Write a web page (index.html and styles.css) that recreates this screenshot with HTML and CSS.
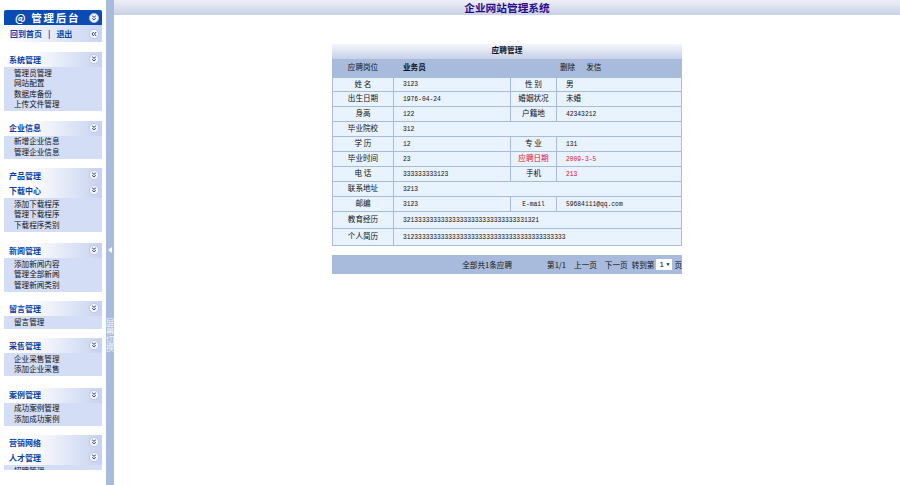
FILE: index.html
```html
<!DOCTYPE html>
<html lang="zh-CN">
<head>
  <meta charset="UTF-8" />
  <title>企业网站管理系统</title>
  <link rel="stylesheet" href="styles.css">
</head>
<body>
  <svg class="defs" width="0" height="0">
    <symbol id="down" viewBox="0 0 12 12">
      <circle cx="6" cy="6" r="5.5" fill="#f4f6fd" stroke="#b4c2e6" stroke-width="1"/>
      <path d="M3.8 3.4 6 5.2 8.2 3.4M3.8 6.4 6 8.2 8.2 6.4" fill="none" stroke="#23408f" stroke-width="1.2"/>
    </symbol>
    <symbol id="left" viewBox="0 0 12 12">
      <circle cx="6" cy="6" r="5.5" fill="#f4f6fd" stroke="#b4c2e6" stroke-width="1"/>
      <path d="M5.6 3.6 3.6 6 5.6 8.4M8.6 3.6 6.6 6 8.6 8.4" fill="none" stroke="#23408f" stroke-width="1.2"/>
    </symbol>
  </svg>

  <div class="page">
    <!-- Left menu -->
    <aside class="sidebar">
      <div class="brand">
        <span><span class="at">@</span>管理后台</span>
        <svg class="chev"><use href="#down"/></svg>
      </div>
      <div class="quick">
        <span class="quick-links"><span>回到首页</span><span>|</span><span>退出</span></span>
        <svg class="chev"><use href="#left"/></svg>
      </div>

      <section class="menu">
        <div class="menu-head">系统管理<svg class="chev"><use href="#down"/></svg></div>
        <ul>
          <li>管理员管理</li>
          <li>网站配置</li>
          <li>数据库备份</li>
          <li>上传文件管理</li>
        </ul>
      </section>

      <section class="menu">
        <div class="menu-head">企业信息<svg class="chev"><use href="#down"/></svg></div>
        <ul>
          <li>新增企业信息</li>
          <li>管理企业信息</li>
        </ul>
      </section>

      <section class="menu gap-wide">
        <div class="menu-head">产品管理<svg class="chev"><use href="#down"/></svg></div>
        <div class="menu-head">下载中心<svg class="chev"><use href="#down"/></svg></div>
        <ul>
          <li>添加下载程序</li>
          <li>管理下载程序</li>
          <li>下载程序类别</li>
        </ul>
      </section>

      <section class="menu">
        <div class="menu-head">新闻管理<svg class="chev"><use href="#down"/></svg></div>
        <ul>
          <li>添加新闻内容</li>
          <li>管理全部新闻</li>
          <li>管理新闻类别</li>
        </ul>
      </section>

      <section class="menu">
        <div class="menu-head">留言管理<svg class="chev"><use href="#down"/></svg></div>
        <ul>
          <li>留言管理</li>
        </ul>
      </section>

      <section class="menu gap-wide">
        <div class="menu-head">采售管理<svg class="chev"><use href="#down"/></svg></div>
        <ul>
          <li>企业采售管理</li>
          <li>添加企业采售</li>
        </ul>
      </section>

      <section class="menu">
        <div class="menu-head">案例管理<svg class="chev"><use href="#down"/></svg></div>
        <ul>
          <li>成功案例管理</li>
          <li>添加成功案例</li>
        </ul>
      </section>

      <section class="menu">
        <div class="menu-head">营销网络<svg class="chev"><use href="#down"/></svg></div>
        <div class="menu-head">人才管理<svg class="chev"><use href="#down"/></svg></div>
        <ul>
          <li>招聘管理</li>
        </ul>
      </section>
    </aside>

    <!-- Splitter -->
    <div class="splitter">
      <i class="arrow"></i>
      <span class="splitter-text">屏幕切换</span>
    </div>

    <div class="content">
      <header class="topbar">企业网站管理系统</header>

      <main class="panel">
        <h2>应聘管理</h2>
        <table class="detail">
          <colgroup>
            <col class="col-a"><col class="col-b"><col class="col-c"><col class="col-d">
          </colgroup>
          <tr class="head">
            <th>应聘岗位</th>
            <td class="strong">业务员</td>
            <td></td>
            <td class="actions"><span>删除</span><span>发信</span></td>
          </tr>
          <tr class="first"><th>姓 名</th><td><span class="num">3123</span></td><th>性 别</th><td>男</td></tr>
          <tr><th>出生日期</th><td><span class="num">1976-04-24</span></td><th>婚姻状况</th><td>未婚</td></tr>
          <tr><th>身高</th><td><span class="num">122</span></td><th>户籍地</th><td><span class="num">42343212</span></td></tr>
          <tr><th>毕业院校</th><td colspan="3"><span class="num">312</span></td></tr>
          <tr><th>学 历</th><td><span class="num">12</span></td><th>专 业</th><td><span class="num">131</span></td></tr>
          <tr><th>毕业时间</th><td><span class="num">23</span></td><th class="red">应聘日期</th><td class="red"><span class="num">2009-3-5</span></td></tr>
          <tr><th>电 话</th><td><span class="num">333333333123</span></td><th>手机</th><td class="red"><span class="num">213</span></td></tr>
          <tr><th>联系地址</th><td colspan="3"><span class="num">3213</span></td></tr>
          <tr><th>邮编</th><td><span class="num">3123</span></td><th><span class="num">E-mail</span></th><td><span class="num">59684111@qq.com</span></td></tr>
          <tr class="tall"><th>教育经历</th><td colspan="3"><span class="num">321333333333333333333333333333331321</span></td></tr>
          <tr class="tall"><th>个人简历</th><td colspan="3"><span class="num">3123333333333333333333333333333333333333333</span></td></tr>
        </table>

        <div class="pager">
          <span class="total">全部共1条应聘</span>
          <span>第1/1</span>
          <span>上一页</span>
          <span>下一页</span>
          <span class="jump">转到第<span class="select">1<b>▼</b></span>页</span>
        </div>
      </main>
    </div>
  </div>
</body>
</html>
```

FILE: styles.css
```css
* { box-sizing: border-box; }
html, body {
  margin: 0;
  height: 100%;
  overflow: hidden;
}
body {
  font-family: "Noto Sans CJK SC", "Liberation Sans", sans-serif;
  font-size: 7.6px;
  color: #111;
  background: white;
}
.defs { position: absolute; }
.page {
  display: flex;
  height: 485px;
}

/* Sidebar */
.sidebar {
  width: 106px;
  height: 470px;
  overflow: hidden;
  padding: 10px 4px 0 4px;
  flex: none;
}
.chev {
  width: 10px;
  height: 10px;
  flex: none;
}
.brand {
  height: 15px;
  background: #0b4cb4;
  color: white;
  font-size: 10.5px;
  font-weight: bold;
  letter-spacing: 1.7px;
  display: flex;
  align-items: center;
  justify-content: space-between;
  padding: 0 3px 0 11px;
  border-radius: 2px 2px 0 0;
}
.at { margin-right: 4px; }
.quick {
  height: 17px;
  margin-bottom: 10px;
  background: linear-gradient(to right, white, #c9d5f3);
  color: #0b3fa6;
  font-size: 8px;
  font-weight: bold;
  display: flex;
  align-items: center;
  justify-content: space-between;
  padding: 0 3px 0 6px;
}
.quick-links {
  display: flex;
  gap: 6px;
}
.menu { margin-bottom: 9.5px; }
.menu.gap-wide { margin-bottom: 11.7px; }
.menu-head {
  height: 15px;
  background: linear-gradient(to right, white 25%, #c6d2f0);
  color: #0b3fa6;
  font-size: 8px;
  font-weight: bold;
  display: flex;
  align-items: center;
  justify-content: space-between;
  padding: 0 3px 1px 5px;
}
.menu ul {
  list-style: none;
  margin: 0;
  padding: 0.5px 0 1.5px 10px;
  background: #d3ddf6;
}
.menu li {
  height: 10.5px;
  line-height: 10.5px;
  color: #111;
}

/* Splitter */
.splitter {
  width: 8px;
  flex: none;
  background: #a9bbdd;
  display: flex;
  flex-direction: column;
  align-items: center;
  padding-top: 247px;
}
.arrow {
  width: 0;
  height: 0;
  border: 3px solid transparent;
  border-left: 0;
  border-right: 4px solid white;
}
.splitter-text {
  writing-mode: vertical-rl;
  color: #f2f5fb;
  font-size: 8.6px;
  line-height: 8px;
  margin-top: 65px;
}

/* Main area */
.content {
  flex: 1;
  min-width: 0;
}
.topbar {
  height: 15px;
  background: linear-gradient(to bottom, #eef0f7, #c8d0e6);
  color: #2c0b8f;
  font-size: 10.7px;
  font-weight: bold;
  line-height: 15px;
  text-align: center;
}
.panel {
  width: 350px;
  margin: 29px auto 0 auto;
}
.panel h2 {
  margin: 0;
  height: 15px;
  line-height: 12px;
  font-size: 7.7px;
  text-align: center;
  background: linear-gradient(to bottom, #f5f6fb, #c6d0e8);
}
.detail {
  width: 100%;
  table-layout: fixed;
  border-collapse: collapse;
  background: #e9f3fe;
}
.col-a { width: 61px; }
.col-b { width: 117px; }
.col-c { width: 46px; }
.detail th, .detail td {
  border: 1px solid #a9bbdd;
  height: 15px;
  padding: 0 0 2px 0;
  font-weight: normal;
  white-space: nowrap;
  line-height: 10px;
}
.detail td { padding-left: 9px; }
.detail .head th, .detail .head td {
  height: 18px;
  padding-bottom: 3px;
  background: #a9bbdd;
}
.detail .head .strong { font-weight: bold; }
.detail .head .actions { padding-left: 3px; }
.actions span { margin-right: 11px; }
.detail .first th, .detail .first td { height: 14px; }
.detail .tall th, .detail .tall td { height: 17px; }
.num {
  font-family: "Liberation Mono", monospace;
  font-size: 6.3px;
  line-height: 8px;
}
.red { color: #e01030; }

/* Pager */
.pager {
  height: 19px;
  margin-top: 9px;
  background: #a9bbdd;
  display: flex;
  align-items: center;
  justify-content: flex-end;
  gap: 8px;
  padding-bottom: 1px;
}
.total { margin-right: 27px; }
.jump {
  display: flex;
  align-items: center;
  margin-left: -4px;
}
.select {
  width: 16px;
  height: 11px;
  background: white;
  font-family: "Liberation Sans", sans-serif;
  font-size: 8px;
  line-height: 11px;
  padding-left: 3px;
  margin: 0 2px;
  display: flex;
  justify-content: space-between;
}
.select b {
  font-size: 5px;
  font-weight: normal;
  margin-right: 2px;
}
```
